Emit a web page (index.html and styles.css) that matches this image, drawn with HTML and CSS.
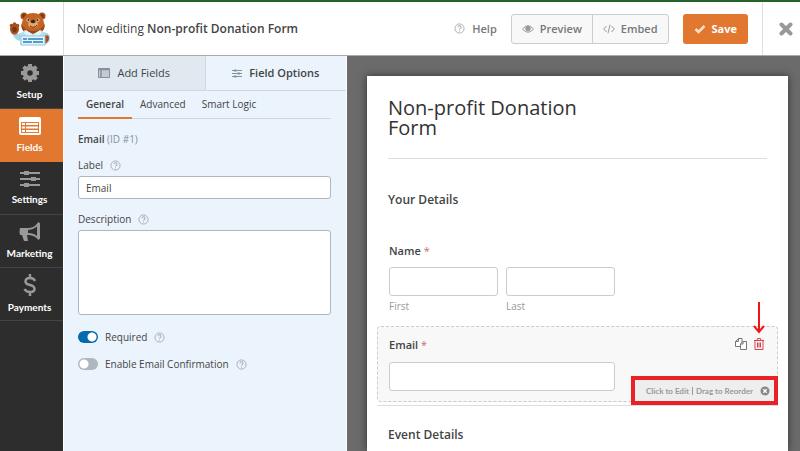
FILE: index.html
```html
<!DOCTYPE html>
<html lang="en">
<head>
  <meta charset="UTF-8" />
  <meta name="viewport" content="width=device-width, initial-scale=1.0"/>
  <title>Form Builder</title>
  <link rel="stylesheet" href="styles.css">
</head>
<body>
  <!-- shared icons -->
  <svg class="sprite" aria-hidden="true">
    <symbol id="help" viewBox="0 0 12 12">
      <circle cx="6" cy="6" r="5" fill="none" stroke="currentColor"/>
      <path d="M4.3 4.7a1.7 1.6 0 1 1 2.5 1.4q-.8.4-.8 1.1M6 8.2v1.1" fill="none" stroke="currentColor" stroke-width="1.1"/>
    </symbol>
    <symbol id="sliders" viewBox="0 0 20 18">
      <path d="M0 3h20M0 9h20M0 15h20" stroke="currentColor" stroke-width="2"/>
      <path d="M4 1h5v4H4zM11 7h5v4h-5zM4 13h5v4H4z" fill="currentColor"/>
    </symbol>
  </svg>

  <header class="topbar">
    <div class="logo">
      <svg viewBox="0 0 42 34" width="42" height="34" role="img" aria-label="Bear mascot">
        <path d="M3 21q2 7 9 8l3-9-6 2z" fill="#a7d6e7"/>
        <ellipse cx="5.500" cy="17" rx="4.500" ry="5.500" fill="#a8501d"/>
        <circle cx="2.500" cy="13.500" r="1.800" fill="#a8501d"/>
        <circle cx="5.500" cy="12" r="1.800" fill="#a8501d"/>
        <circle cx="8.500" cy="13.500" r="1.800" fill="#a8501d"/>
        <ellipse cx="5.500" cy="17.500" rx="2.200" ry="2.800" fill="#77360f"/>
        <path d="M33 20q8 0 8 6t-7 7z" fill="#a7d6e7"/>
        <path d="M35 24q5-2 5 2t-5 6z" fill="#a8501d"/>
        <circle cx="15" cy="4" r="3.500" fill="#a94d19"/>
        <circle cx="33" cy="4" r="3.500" fill="#a94d19"/>
        <circle cx="15" cy="4" r="1.700" fill="#71330f"/>
        <circle cx="33" cy="4" r="1.700" fill="#71330f"/>
        <path d="M24 1q9 0 10.500 8Q39 21 24 21T13.500 9Q15 1 24 1z" fill="#c56322"/>
        <path d="M12.500 12q3 7 11.500 7t11.500-7q1 10-11.500 10T12.500 12z" fill="#9d4617"/>
        <ellipse cx="24" cy="12" rx="5" ry="4" fill="#e3a56a"/>
        <ellipse cx="24" cy="9.500" rx="2.500" ry="1.700" fill="#42251b"/>
        <circle cx="19" cy="8" r="1.500" fill="#fff"/>
        <circle cx="29" cy="8" r="1.500" fill="#fff"/>
        <circle cx="19.300" cy="8" r="1" fill="#222"/>
        <circle cx="28.700" cy="8" r="1" fill="#222"/>
        <path d="M21 14q4 3 7-1" fill="none" stroke="#6d2c17"/>
        <path d="M11 22l5-4 8 4 8-4 4 4v11H11z" fill="#b9dfed"/>
        <path d="M17 18l7 5 7-5 2 3-5 4-4-2-4 2-5-4z" fill="#e1f3f8"/>
        <path d="M12 24h24v9H12z" fill="#e8f6fb" stroke="#8cc7e0"/>
        <path d="M14 27h4M19 27h15M14 30h9M24 30h10" stroke="#247fbb" stroke-width="1.500"/>
      </svg>
    </div>
    <div class="editing">Now editing <strong>Non-profit Donation Form</strong></div>
    <div class="actions">
      <button class="help-btn"><svg class="i11"><use href="#help"/></svg>Help</button>
      <div class="btn-group">
        <button><svg viewBox="0 0 12 10" width="12" height="10"><path d="M.5 5Q6-1.500 11.500 5 6 11.500.5 5z" fill="none" stroke="currentColor"/><circle cx="6" cy="4.500" r="2.700" fill="currentColor"/></svg>Preview</button>
        <button><svg viewBox="0 0 12 10" width="12" height="10" fill="none" stroke="currentColor"><path d="M3.500 2L.7 5l2.800 3M8.500 2l2.800 3-2.800 3M7 .7L5 9.300"/></svg>Embed</button>
      </div>
      <button class="save"><svg viewBox="0 0 12 10" width="12" height="10"><path d="M1.500 5l3 3L10.500 2" fill="none" stroke="#fbe0cc" stroke-width="2.500"/></svg>Save</button>
    </div>
    <button class="close" aria-label="Close"><svg viewBox="0 0 14 14" width="14" height="14"><path d="M2.500 2.500l9 9M11.500 2.500l-9 9" stroke="#999" stroke-width="4" stroke-linecap="round"/></svg></button>
  </header>

  <div class="builder">
    <nav class="sidebar">
      <a href="#"><svg viewBox="0 0 20 20" width="20" height="20"><circle cx="10" cy="10" r="5" fill="none" stroke="currentColor" stroke-width="4.500"/><path d="M10 1v4M10 15v4M1 10h4M15 10h4M3.600 3.600l3 3M13.400 13.400l3 3M3.600 16.400l3-3M13.400 6.600l3-3" stroke="currentColor" stroke-width="4"/></svg>Setup</a>
      <a href="#" class="active"><svg viewBox="0 0 22 20" width="22" height="20"><rect y="1" width="22" height="18" rx="2" fill="#fff"/><path d="M2 6h18v11H2z" fill="#e27730"/><path d="M3 8h3M7 8h12M3 11.500h3M7 11.500h12M3 15h3M7 15h12" stroke="#fff" stroke-width="2"/></svg>Fields</a>
      <a href="#"><svg class="big"><use href="#sliders"/></svg>Settings</a>
      <a href="#"><svg viewBox="0 0 22 20" width="22" height="20"><path d="M1 6h8v7H8l1 6H5L3 13H1q-1-3 0-7z" fill="currentColor"/><path d="M9 7q6 0 10-5v14q-4-4-10-4" fill="none" stroke="currentColor" stroke-width="2"/><path d="M19 1h2v16h-2z" fill="currentColor"/></svg>Marketing</a>
      <a href="#"><svg viewBox="0 0 14 22" width="14" height="22"><path d="M12 7Q11 4 7 4 2.500 4 2.500 7.500q0 2.500 4.500 3.500t4.500 4q0 3-4.500 3-4 0-5.500-3M7 0v4M7 18v4" fill="none" stroke="currentColor" stroke-width="2.500"/></svg>Payments</a>
    </nav>

    <aside class="panel">
      <div class="tabs">
        <button><svg viewBox="0 0 12 10" width="12" height="10"><path d="M.5.500h11v9H.5z" fill="#c3cad2" stroke="#86919c"/><path d="M1 1.500h10M3 2v7" stroke="#86919c" stroke-width="1.500"/></svg>Add Fields</button>
        <button class="active"><svg class="small"><use href="#sliders"/></svg>Field Options</button>
      </div>
      <div class="options">
        <div class="subtabs">
          <a href="#" class="active">General</a>
          <a href="#">Advanced</a>
          <a href="#">Smart Logic</a>
        </div>
        <p class="field-name"><strong>Email</strong> (ID #1)</p>
        <div class="option">
          <label for="label">Label <svg class="i11"><use href="#help"/></svg></label>
          <input type="text" id="label" value="Email">
        </div>
        <div class="option">
          <label for="description">Description <svg class="i11"><use href="#help"/></svg></label>
          <textarea id="description"></textarea>
        </div>
        <label class="toggle"><input type="checkbox" checked>Required <svg class="i11"><use href="#help"/></svg></label>
        <label class="toggle"><input type="checkbox">Enable Email Confirmation <svg class="i11"><use href="#help"/></svg></label>
      </div>
    </aside>

    <main class="preview">
      <div class="form">
        <h1>Non-profit Donation Form</h1>
        <h2>Your Details</h2>
        <div class="field">
          <span class="label">Name <em>*</em></span>
          <div class="names">
            <div><input type="text" id="first"><label for="first">First</label></div>
            <div><input type="text" id="last"><label for="last">Last</label></div>
          </div>
        </div>
        <div class="field selected">
          <label class="label" for="email">Email <em>*</em></label>
          <input type="text" id="email">
          <div class="tools">
            <button aria-label="Duplicate"><svg viewBox="0 0 12 12" width="12" height="12" fill="#fff" stroke="#777"><path d="M3.500.5H7v8H.5v-5zM3.500.5v3h-3"/><path d="M8 3.500h3.500v8h-6V6zM8 3.500V6H5.500"/></svg></button>
            <button aria-label="Delete"><svg viewBox="0 0 12 12" width="12" height="12" fill="none" stroke="#d6424c"><path d="M1 2.500h10M4 2.500l.5-2h3l.5 2M2 2.500v9h8v-9M4.500 4.500v5M6 4.500v5M7.500 4.500v5"/></svg></button>
          </div>
          <svg class="arrow" viewBox="0 0 12 34" width="12" height="34"><path d="M6 1v30M1 25l5 6 5-6" fill="none" stroke="#f01414" stroke-width="2"/></svg>
          <div class="hint">Click to Edit<i></i>Drag to Reorder
            <button aria-label="Dismiss"><svg viewBox="0 0 10 10" width="10" height="10"><circle cx="5" cy="5" r="4.500" fill="#888"/><path d="M3.300 3.300l3.400 3.400M6.700 3.300L3.300 6.700" stroke="#fff" stroke-width="1.300"/></svg></button>
          </div>
        </div>
        <h2 class="next">Event Details</h2>
      </div>
    </main>
  </div>
</body>
</html>
```
FILE: styles.css
```css
* {
  box-sizing: border-box;
}
body {
  margin: 0;
  height: 100vh;
  display: flex;
  flex-direction: column;
  overflow: hidden;
  font-family: "Open Sans", "Noto Sans", sans-serif;
  font-size: 11px;
  line-height: 16px;
  color: #444;
}
button {
  font: inherit;
  color: inherit;
  border: 0;
  padding: 0;
  background: none;
  display: flex;
  align-items: center;
  justify-content: center;
}
a {
  color: inherit;
  text-decoration: none;
}
svg {
  flex: none;
}
strong {
  font-weight: 600;
}
.sprite {
  display: none;
}
.i11 {
  width: 11px;
  height: 11px;
  color: #a3abb3;
}

/* top bar */
.topbar {
  flex: none;
  display: flex;
  align-items: stretch;
  height: 56px;
  border-top: 2px solid #23622a;
  border-bottom: 1px solid #aaa;
  background: #fff;
}
.logo {
  width: 64px;
  border-right: 1px solid #ddd;
  display: flex;
  align-items: center;
  justify-content: center;
  padding-right: 4px;
}
.editing {
  align-self: center;
  padding-left: 13px;
  font-size: 12px;
}
.actions {
  margin-left: auto;
  display: flex;
  align-items: center;
  gap: 14px;
  padding-right: 14px;
  font-weight: 600;
  color: #777;
}
.help-btn {
  gap: 7px;
}
.btn-group {
  display: flex;
  border: 1px solid #ccc;
  border-radius: 3px;
  background: #f8f8f8;
}
.btn-group button {
  height: 28px;
  padding: 0 10px;
  gap: 6px;
}
.btn-group button + button {
  border-left: 1px solid #ccc;
}
.btn-group svg {
  color: #999;
}
.save {
  height: 30px;
  padding: 0 11px;
  gap: 6px;
  border-radius: 3px;
  background: #e27730;
  color: #fff;
  font-weight: 700;
}
.close {
  width: 38px;
  padding-left: 8px;
  border-left: 1px solid #ddd;
}

.builder {
  flex: 1;
  min-height: 0;
  display: flex;
}

/* left navigation */
.sidebar {
  flex: none;
  width: 64px;
  background: #2d2d2d;
  border-right: 1px solid #fff;
}
.sidebar a {
  height: 53px;
  display: flex;
  flex-direction: column;
  align-items: center;
  justify-content: center;
  gap: 3px;
  padding-right: 4px;
  border-bottom: 1px solid #444;
  font-family: Lato, sans-serif;
  font-size: 10px;
  font-weight: 700;
  color: #fff;
}
.sidebar svg {
  color: #999;
}
.sidebar .active {
  background: #e27730;
  border-color: #e27730;
}
.big {
  width: 20px;
  height: 18px;
}
.small {
  width: 10px;
  height: 9px;
}

/* field options */
.panel {
  flex: none;
  width: 283px;
  background: #ebf3fc;
  border-right: 1px solid #fff;
  font-size: 10px;
}
.tabs {
  display: flex;
  height: 35px;
  border-bottom: 1px solid #ced7e0;
  font-size: 11px;
}
.tabs button {
  flex: 1;
  gap: 7px;
  background: #e0e8f0;
  border-right: 1px solid #ced7e0;
}
.tabs .active {
  background: #ebf3fc;
  border: 0;
  font-weight: 600;
}
.tabs svg {
  color: #86919c;
}
.options {
  padding: 0 15px 0 14px;
}
.subtabs {
  display: flex;
  height: 28px;
  border-bottom: 1px solid #ced7e0;
}
.subtabs a {
  padding: 5px 8px 0;
  height: 28px;
}
.subtabs .active {
  border-bottom: 2px solid #e27730;
  font-weight: 600;
}
.field-name {
  margin: 12px 0 10px;
  color: #86919c;
}
.field-name strong {
  color: #444;
}
.option {
  margin-bottom: 12px;
}
.option label {
  display: flex;
  align-items: center;
  gap: 7px;
  margin-bottom: 3px;
}
.option input,
.option textarea {
  display: block;
  width: 100%;
  height: 23px;
  padding: 0 7px;
  border: 1px solid #b0b6bd;
  border-radius: 3px;
  background: #fff;
  color: #444;
  font: inherit;
  resize: none;
}
.option textarea {
  height: 85px;
}
.toggle {
  display: flex;
  align-items: center;
  gap: 7px;
  margin-top: 14px;
  margin-bottom: 11px;
}
.toggle + .toggle {
  margin-top: 0;
}
.toggle input {
  appearance: none;
  width: 20px;
  height: 12px;
  margin: 0;
  border-radius: 6px;
  background: radial-gradient(circle at 6px 6px, #fff 4px, #b0b6bd 5px);
}
.toggle input:checked {
  background: radial-gradient(circle at 14px 6px, #fff 4px, #036aab 5px);
}

/* form preview */
.preview {
  flex: 1;
  min-width: 0;
  padding: 20px 12px 0 20px;
  background: #6b6b6b;
}
.form {
  height: 100%;
  padding: 22px 10px 0;
  background: #fff;
  box-shadow: 0 0 8px #333;
}
.form h1 {
  margin: 0 11px;
  padding: 0 160px 20px 0;
  border-bottom: 1px solid #ddd;
  font-size: 20px;
  line-height: 20px;
  font-weight: 400;
  color: #333;
}
.form h2 {
  margin: 32px 11px 34px;
  font-size: 12px;
  line-height: 18px;
  font-weight: 600;
}
.field {
  padding: 0 12px;
}
.label {
  display: block;
  margin-bottom: 8px;
  font-weight: 600;
}
.label em {
  color: #d6636e;
  font-style: normal;
  font-weight: 400;
}
.field input {
  display: block;
  width: 226px;
  height: 29px;
  border: 1px solid #ccc;
  border-radius: 3px;
  background: #fff;
}
.names {
  display: grid;
  grid-template-columns: 109px 109px;
  gap: 8px;
}
.names input {
  width: 100%;
}
.names label {
  display: block;
  margin-top: 2px;
  font-size: 10px;
  color: #999;
}
.selected {
  position: relative;
  margin-top: 12px;
  padding: 10px 11px;
  border: 1px dashed #ccc;
  border-radius: 4px;
  background: #f8f8f8;
}
.selected .label {
  margin-bottom: 9px;
}
.tools {
  position: absolute;
  top: 11px;
  right: 12px;
  display: flex;
  gap: 6px;
}
.arrow {
  position: absolute;
  top: -26px;
  right: 12px;
}
.hint {
  position: absolute;
  right: -1px;
  bottom: -4px;
  display: flex;
  align-items: center;
  height: 29px;
  padding: 0 4px 0 11px;
  border: 4px solid #ea2127;
  background: #eee;
  font-family: Lato, sans-serif;
  font-size: 8px;
  font-weight: 700;
  color: #999;
}
.hint i {
  height: 8px;
  margin: 0 3px;
  border-left: 1px solid #999;
}
.hint button {
  margin-left: 7px;
}
.form .next {
  margin: 3px 0 0;
  padding: 20px 11px 0;
  border-top: 1px solid #ddd;
}
```
